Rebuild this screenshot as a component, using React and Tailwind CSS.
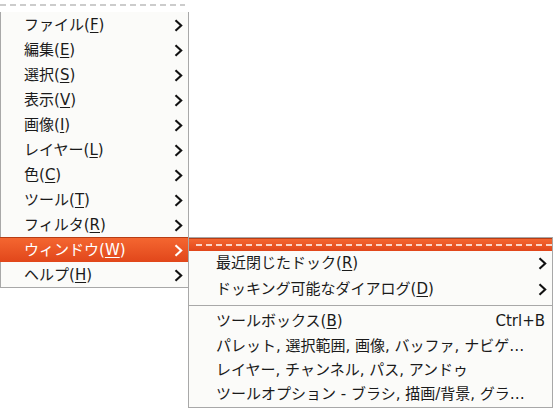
import React from 'react';

const font = { fontFamily: '"DejaVu Sans", "Noto Sans CJK JP", sans-serif' };

const Chevron = ({ white }) => (
  <svg width="9" height="13" viewBox="0 0 9 13" className="shrink-0">
    <path
      d="M1.5 1.2 L7.2 6.5 L1.5 11.8"
      fill="none"
      stroke={white ? '#ffffff' : '#111111'}
      strokeWidth="2.1"
    />
  </svg>
);

const Tearoff = ({ color }) => (
  <svg width="100%" height="2" className="block">
    <line x1="0" y1="1" x2="100%" y2="1" stroke={color} strokeWidth="1.5" strokeDasharray="6 4" />
  </svg>
);

const Label = ({ text, mn }) => (
  <span>
    {text}(<span className="underline decoration-1 underline-offset-2">{mn}</span>)
  </span>
);

const mainItems = [
  ['ファイル', 'F'],
  ['編集', 'E'],
  ['選択', 'S'],
  ['表示', 'V'],
  ['画像', 'I'],
  ['レイヤー', 'L'],
  ['色', 'C'],
  ['ツール', 'T'],
  ['フィルタ', 'R'],
  ['ウィンドウ', 'W'],
  ['ヘルプ', 'H'],
];

export default function App() {
  return (
    <div className="relative w-[553px] h-[408px] bg-white text-[15px] text-[#1a1a1a]" style={font}>
      {/* メインメニュー */}
      <div className="w-[189px]">
        <div className="h-[12px] pt-[4px] pr-[4px]">
          <Tearoff color="#bcbcbc" />
        </div>
        <div className="bg-[#fbfbf9] border-x border-b border-[#a8a8a8]">
          {mainItems.map(([t, m]) => {
            const active = m === 'W';
            return (
              <div
                key={m}
                className={
                  'h-[25px] flex items-center justify-between pt-px ' +
                  (active
                    ? 'bg-gradient-to-b from-[#f46630] to-[#e1461a] border-t border-[#b63d15] text-white -mx-px pl-[24px] pr-[6px]'
                    : 'pl-[23px] pr-[5px]')
                }
              >
                <Label text={t} mn={m} />
                <Chevron white={active} />
              </div>
            );
          })}
        </div>
      </div>

      {/* ウィンドウ サブメニュー */}
      <div className="absolute left-[188px] top-[237px] w-[365px] h-[171px] bg-[#fbfbf9] border border-[#a8a8a8]">
        <div className="h-[13px] bg-gradient-to-b from-[#f46630] to-[#e1461a] border-t border-[#b63d15] pt-[5px] pl-[7px]">
          <Tearoff color="#ffffff" />
        </div>
        <div className="h-[25px] flex items-center justify-between pl-[27px] pr-[5px]">
          <Label text="最近閉じたドック" mn="R" />
          <Chevron />
        </div>
        <div className="h-[25px] flex items-center justify-between pl-[27px] pr-[5px] pt-px">
          <Label text="ドッキング可能なダイアログ" mn="D" />
          <Chevron />
        </div>
        <div className="h-[8px] flex items-center">
          <div className="w-full h-px bg-[#a8a8a8]" />
        </div>
        <div className="h-[25px] flex items-center justify-between pl-[27px] pr-[7px]">
          <Label text="ツールボックス" mn="B" />
          <span>Ctrl+B</span>
        </div>
        <div className="h-[24px] flex items-center pl-[27px]">パレット, 選択範囲, 画像, バッファ, ナビゲ…</div>
        <div className="h-[24px] flex items-center pl-[27px]">レイヤー, チャンネル, パス, アンドゥ</div>
        <div className="h-[24px] flex items-center pl-[27px]">ツールオプション - ブラシ, 描画/背景, グラ…</div>
      </div>
    </div>
  );
}
